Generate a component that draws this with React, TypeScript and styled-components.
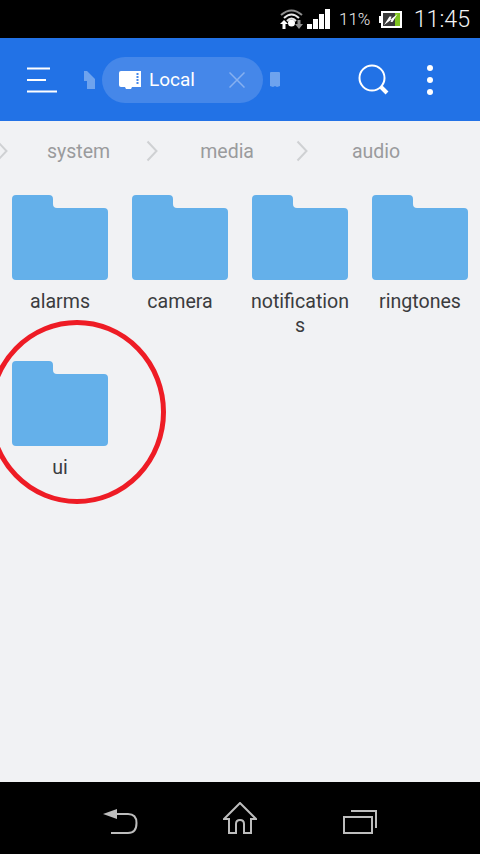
import React from 'react';
import styled, { createGlobalStyle } from 'styled-components';

const GlobalStyle = createGlobalStyle`
  html, body {
    margin: 0;
    padding: 0;
    background: #000;
  }
  * {
    box-sizing: border-box;
  }
`;

const Screen = styled.div`
  position: relative;
  width: 480px;
  height: 854px;
  overflow: hidden;
  display: flex;
  flex-direction: column;
  background: #f1f2f4;
  font-family: Roboto, "Liberation Sans", sans-serif;
`;

const StatusBar = styled.div`
  height: 38px;
  flex: none;
  background: #000;
  color: #ececec;
  display: flex;
  align-items: center;
  padding: 0 10px 0 280px;
`;

const StatusIcon = styled.svg<{ $gap: number }>`
  display: block;
  flex: none;
  margin-right: ${p => p.$gap}px;
`;

const Percent = styled.span`
  font-size: 17px;
  font-weight: 300;
  width: 41px;
  line-height: 38px;
`;

const Clock = styled.span`
  font-size: 23.2px;
  font-weight: 300;
  margin-left: 12px;
  line-height: 38px;
  color: #f4f4f4;
`;

const AppBar = styled.div`
  height: 83px;
  flex: none;
  background: #2272e6;
  display: flex;
  align-items: center;
  padding: 0 0 0 27px;
`;

const BarIcon = styled.svg<{ $left: number }>`
  display: block;
  flex: none;
  margin-left: ${p => p.$left}px;
`;

const TabPill = styled.div`
  width: 161px;
  height: 46px;
  margin-left: 7px;
  border-radius: 23px;
  background: #4587e9;
  display: flex;
  align-items: center;
  padding-left: 17px;
  color: #fff;
  font-size: 19px;
`;

const TabLabel = styled.span`
  width: 80px;
  margin-left: 8px;
`;

const Crumbs = styled.div`
  height: 60px;
  flex: none;
  display: flex;
  align-items: center;
  color: #9a9b9d;
  font-size: 19.5px;
`;

const Crumb = styled.span<{ $left: number }>`
  margin-left: ${p => p.$left}px;
`;

const Chevron = styled.svg<{ $left: number }>`
  display: block;
  flex: none;
  margin-left: ${p => p.$left}px;
`;

const FolderGrid = styled.div`
  flex: 1;
  display: grid;
  grid-template-columns: repeat(4, 120px);
  grid-auto-rows: min-content;
  padding-top: 14px;
`;

const FolderCell = styled.div`
  height: 166px;
  display: flex;
  flex-direction: column;
  align-items: center;
`;

const FolderLabel = styled.div`
  width: 104px;
  margin-top: 9px;
  font-size: 19.6px;
  line-height: 24px;
  color: #3b3c3e;
  text-align: center;
  word-break: break-all;
`;

const NavBar = styled.div`
  height: 72px;
  flex: none;
  background: #000;
  display: flex;
  align-items: flex-end;
  padding: 0 0 20px 103px;
`;

const NavIcon = styled.svg<{ $left: number }>`
  display: block;
  flex: none;
  margin-left: ${p => p.$left}px;
`;

const Annotation = styled.svg`
  position: absolute;
  left: 0;
  top: 315px;
`;

const folders = ['alarms', 'camera', 'notifications', 'ringtones', 'ui'];

const FolderIcon = () => (
  <svg width="96" height="86" viewBox="0 0 96 86" style={{ display: 'block' }}>
    <path
      d="M4 0H37Q41 0 41 4V9Q41 13 45 13H92Q96 13 96 17V81Q96 85 92 85H4Q0 85 0 81V4Q0 0 4 0Z"
      fill="#64b0ea"
    />
  </svg>
);

const Arrow = ({ left }: { left: number }) => (
  <Chevron $left={left} width="12" height="22" viewBox="0 0 12 22">
    <path d="M1.500 1.500 10.500 11 1.500 20.500" fill="none" stroke="#cfd1d3" strokeWidth="2" />
  </Chevron>
);

export default function App() {
  return (
    <Screen>
      <GlobalStyle />
      <StatusBar>
        <StatusIcon $gap={4} width="23" height="20" viewBox="0 0 23 20">
          <path d="M1 6Q11.500 -3 22 6" fill="none" stroke="#8e8e8e" strokeWidth="2" />
          <path d="M4 9Q11.500 2 19 9" fill="none" stroke="#e8e8e8" strokeWidth="2" />
          <path d="M7 12Q11.500 7 16 12" fill="none" stroke="#e8e8e8" strokeWidth="2" />
          <circle cx="11.500" cy="14" r="3.500" fill="#fff" />
          <path d="M4 11 8 15H5.500V20H2.500V15H0Z" fill="#fff" />
          <path d="M19 20 23 15H20.500V11H17.500V15H15Z" fill="#8e8e8e" />
        </StatusIcon>
        <StatusIcon $gap={9} width="23" height="20" viewBox="0 0 23 20">
          <path d="M0 15H5V20H0ZM6 10H11V20H6ZM12 5H17V20H12ZM18 0H23V20H18Z" fill="#fff" />
        </StatusIcon>
        <Percent>11%</Percent>
        <StatusIcon $gap={0} width="23" height="17" viewBox="0 0 23 17">
          <rect x="0" y="5" width="2" height="7" fill="#fff" />
          <rect x="3" y="1" width="19" height="15" fill="#3a3a3a" stroke="#fff" strokeWidth="2" />
          <rect x="16" y="2" width="5" height="13" fill="#7ec21f" />
          <path d="M5 14 10.500 5.500H12.500L11.500 8.500 18.500 3 13.500 11H11.500L12.500 8.500Z" fill="#fff" />
        </StatusIcon>
        <Clock>11:45</Clock>
      </StatusBar>

      <AppBar>
        <svg width="30" height="26" viewBox="0 0 30 26" style={{ display: 'block', flex: 'none' }}>
          <path d="M0 1.500H23M0 13H19M0 24.500H30" stroke="#fff" strokeWidth="2" />
        </svg>
        <BarIcon $left={27} width="11" height="18" viewBox="0 0 11 18">
          <path d="M0 0H3L11 8V18H3V10H0Z" fill="#6ea3ee" />
        </BarIcon>
        <TabPill>
          <svg width="22" height="18" viewBox="0 0 22 18" style={{ display: 'block', flex: 'none' }}>
            <path d="M2 0H22V16H13L12 18H7L6 16H2Q0 16 0 14V2Q0 0 2 0Z" fill="#fff" />
            <path d="M18.500 2V14" stroke="#4587e9" strokeWidth="2" strokeDasharray="2 1" />
          </svg>
          <TabLabel>Local</TabLabel>
          <svg width="16" height="16" viewBox="0 0 16 16" style={{ display: 'block', flex: 'none' }}>
            <path d="M.500 .500 15.500 15.500M15.500 .500 .500 15.500" stroke="#86b0f0" strokeWidth="1.500" />
          </svg>
        </TabPill>
        <BarIcon $left={7} width="10" height="15" viewBox="0 0 10 15">
          <path d="M1 0H9Q10 0 10 1V14L7 15 5 14 3 15 0 14V1Q0 0 1 0Z" fill="#6ea3ee" />
        </BarIcon>
        <BarIcon $left={78} width="31" height="31" viewBox="0 0 31 31">
          <circle cx="14" cy="14" r="12.500" fill="none" stroke="#fff" strokeWidth="2" />
          <path d="M23 23 29 29" stroke="#fff" strokeWidth="4" />
        </BarIcon>
        <BarIcon $left={37} width="8" height="32" viewBox="0 0 8 32">
          <circle cx="4" cy="4" r="3" fill="#fff" />
          <circle cx="4" cy="16" r="3" fill="#fff" />
          <circle cx="4" cy="28" r="3" fill="#fff" />
        </BarIcon>
      </AppBar>

      <Crumbs>
        <Arrow left={-4} />
        <Crumb $left={39}>system</Crumb>
        <Arrow left={36} />
        <Crumb $left={42}>media</Crumb>
        <Arrow left={42} />
        <Crumb $left={44}>audio</Crumb>
      </Crumbs>

      <FolderGrid>
        {folders.map(name => (
          <FolderCell key={name}>
            <FolderIcon />
            <FolderLabel>{name}</FolderLabel>
          </FolderCell>
        ))}
      </FolderGrid>

      <NavBar>
        <NavIcon $left={0} width="35" height="25" viewBox="0 0 35 25">
          <path d="M0 5 14 0V10Z" fill="#bdbdbd" />
          <path d="M12 5H25Q33.500 5 33.500 14Q33.500 24 25 24H8" fill="none" stroke="#bdbdbd" strokeWidth="2" />
        </NavIcon>
        <NavIcon $left={85} width="34" height="32" viewBox="0 0 34 32">
          <path
            d="M1 17 17 1 33 17H28V31H21V22Q21 18 17 18Q13 18 13 22V31H6V17Z"
            fill="none"
            stroke="#bdbdbd"
            strokeWidth="2"
          />
        </NavIcon>
        <NavIcon $left={86} width="34" height="24" viewBox="0 0 34 24">
          <path d="M1 7H29V23H1Z" fill="none" stroke="#bdbdbd" strokeWidth="2" />
          <path d="M8 1H33V18" fill="none" stroke="#bdbdbd" strokeWidth="2" />
        </NavIcon>
      </NavBar>

      <Annotation width="170" height="195" viewBox="0 0 170 195">
        <ellipse cx="77" cy="97" rx="86.500" ry="89.500" fill="none" stroke="#ee1c25" strokeWidth="5" />
      </Annotation>
    </Screen>
  );
}
